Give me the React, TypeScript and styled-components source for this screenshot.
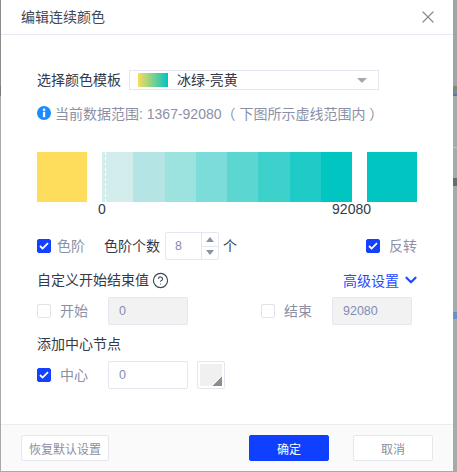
import React from "react";
import styled, { createGlobalStyle } from "styled-components";
import { ChevronDown, CircleHelp, X } from "lucide-react";

const Global = createGlobalStyle`
  html, body { margin: 0; padding: 0; background: #a9a9a9; }
  * { box-sizing: border-box; }
  body { font-family: "Liberation Sans", "Noto Sans CJK SC", sans-serif; font-size: 14px; }
`;

const Page = styled.div`
  display: flex;
  width: 457px;
  height: 472px;
  overflow: hidden;
`;
const LeftEdge = styled.div`
  width: 1px;
  flex: none;
  background: linear-gradient(#8c8c8c 0 86px, #7c7c7c 86px 95px, #5d74b0 95px 96px, #a9a9a9 96px);
`;
const RightEdge = styled.div`
  width: 4px;
  flex: none;
  background: linear-gradient(#a3a3a3 0 86px, #848484 86px 94px, #5d74b0 94px 96px, #a9a9a9 96px 147px,
    #c4c4c4 147px 148px, #a9a9a9 148px 178px, #6b6b6b 178px 186px, #a9a9a9 186px 312px,
    #6b90bf 312px 319px, #a9a9a9 319px);
`;
const Dialog = styled.div`
  width: 452px;
  height: 471px;
  background: #fff;
  display: flex;
  flex-direction: column;
  color: #333a4a;
`;
const Header = styled.header`
  height: 35px;
  flex: none;
  border-bottom: 1px solid #e8e8f2;
  padding: 0 15px 0 20px;
  display: flex;
  align-items: center;
  justify-content: space-between;
`;
const Title = styled.div`
  font-size: 14px;
  line-height: 34px;
  color: #3f4658;
`;
const CloseIcon = styled(X)`
  width: 20px;
  height: 20px;
  color: #8a8d94;
`;
const Body = styled.main`
  flex: 1;
  padding: 35px 36px 0;
`;
const TemplateRow = styled.div`
  display: flex;
  align-items: center;
  height: 20px;
  gap: 8px;
`;
const Label = styled.span<{ $muted?: boolean; $ml?: number }>`
  line-height: 20px;
  white-space: nowrap;
  flex: none;
  color: ${(p) => (p.$muted ? "#8b90a6" : "#333a4a")};
  margin-left: ${(p) => p.$ml ?? 0}px;
`;
const Select = styled.div`
  width: 250px;
  height: 20px;
  border: 1px solid #e6e6f0;
  display: flex;
  align-items: center;
  padding: 0 11px 0 8px;
`;
const Swatch = styled.span`
  width: 30px;
  height: 14px;
  background: linear-gradient(90deg, #f7dc5c, #00c5c1);
`;
const SelectText = styled.span`
  margin-left: 9px;
  flex: 1;
  line-height: 18px;
`;
const Caret = styled.span`
  width: 0;
  height: 0;
  border-left: 5px solid transparent;
  border-right: 5px solid transparent;
  border-top: 5px solid #a4a7b4;
`;
const InfoRow = styled.div`
  margin-top: 13px;
  height: 20px;
  display: flex;
  align-items: center;
  gap: 4px;
  color: #8b90a6;
  white-space: nowrap;
`;
const BarRow = styled.div`
  margin-top: 29px;
  display: flex;
  gap: 15px;
  height: 50px;
`;
const EndBlock = styled.div<{ $c: string }>`
  width: 50px;
  background: ${(p) => p.$c};
`;
const Strip = styled.div`
  width: 250px;
  display: flex;
  position: relative;
`;
const Step = styled.div<{ $c: string }>`
  flex: 1;
  background: ${(p) => p.$c};
`;
const Dash = styled.div`
  position: absolute;
  left: 3px;
  top: 0;
  bottom: 0;
  border-left: 1px dashed #fff;
`;
const Axis = styled.div`
  margin-left: 61px;
  width: 273px;
  height: 16px;
  display: flex;
  justify-content: space-between;
  line-height: 15px;
  color: #333a4a;
`;
const ScaleRow = styled.div`
  margin-top: 14px;
  height: 28px;
  display: flex;
  align-items: center;
`;
const Check = styled.span<{ $on?: boolean }>`
  width: 14px;
  height: 14px;
  flex: none;
  border-radius: 2px;
  display: inline-flex;
  align-items: center;
  justify-content: center;
  background: ${(p) => (p.$on ? "#1440ff" : "#fff")};
  border: 1px solid ${(p) => (p.$on ? "#1440ff" : "#e3e3ec")};
`;
const CheckBox = ({ on }: { on?: boolean }) => (
  <Check $on={on}>
    {on && (
      <svg width="10" height="8" viewBox="0 0 10 8">
        <path d="M1 4l2.6 2.6L9 1.2" fill="none" stroke="#fff" strokeWidth="1.8" />
      </svg>
    )}
  </Check>
);
const Spin = styled.div`
  margin-left: 5px;
  width: 54px;
  height: 28px;
  border: 1px solid #e6e6f0;
  border-radius: 2px;
  display: flex;
  flex: none;
`;
const SpinValue = styled.span`
  flex: 1;
  padding-left: 9px;
  font-size: 12.5px;
  line-height: 26px;
  color: #7f8db5;
`;
const SpinButtons = styled.div`
  width: 17px;
  border-left: 1px solid #e6e6f0;
  display: flex;
  flex-direction: column;
`;
const SpinButton = styled.div<{ $down?: boolean }>`
  flex: 1;
  display: flex;
  align-items: center;
  justify-content: center;
  ${(p) => (p.$down ? "border-top: 1px solid #e6e6f0;" : "")}
  &::after {
    content: "";
    border-left: 4px solid transparent;
    border-right: 4px solid transparent;
    ${(p) => (p.$down ? "border-top: 5px solid #8d91a6;" : "border-bottom: 5px solid #8d91a6;")}
  }
`;
const Spacer = styled.span<{ $w?: number }>`
  ${(p) => (p.$w ? `width: ${p.$w}px; flex: none;` : "flex: 1;")}
`;
const RangeHead = styled.div`
  margin-top: 10px;
  height: 20px;
  display: flex;
  align-items: center;
`;
const HelpIcon = styled(CircleHelp)`
  width: 17px;
  height: 17px;
  margin-left: 3px;
  color: #3f4658;
`;
const Advanced = styled.div`
  margin-left: auto;
  margin-right: 1px;
  display: flex;
  align-items: center;
  gap: 6px;
  color: #1f4bff;
`;
const AdvancedChevron = styled(ChevronDown)`
  width: 18px;
  height: 18px;
  margin: 0 -3.5px;
`;
const FieldRow = styled.div<{ $mt: number }>`
  margin-top: ${(p) => p.$mt}px;
  height: 28px;
  display: flex;
  align-items: center;
`;
const SectionTitle = styled.div`
  margin-top: 9px;
  height: 20px;
  line-height: 20px;
`;
const ValueBox = styled.div<{ $off?: boolean }>`
  width: 80px;
  height: 28px;
  flex: none;
  margin-left: 20px;
  border: 1px solid #e6e6f0;
  border-radius: 2px;
  padding-left: 10px;
  font-size: 12.5px;
  line-height: 26px;
  color: #7f8db5;
  background: ${(p) => (p.$off ? "#f2f2f3" : "#fff")};
`;
const ColorPicker = styled.div`
  margin-left: 9px;
  width: 28px;
  height: 28px;
  border: 1px solid #e6e6f0;
  border-radius: 2px;
  padding: 2px;
`;
const ColorFill = styled.div`
  width: 100%;
  height: 100%;
  background: linear-gradient(135deg, #f0f0f0 0 78%, #8c8c8c 78%);
`;
const Footer = styled.footer`
  height: 47px;
  flex: none;
  background: #fafafa;
  border-top: 1px solid #ececf0;
  padding: 10px 20px 0;
  display: flex;
  align-items: flex-start;
`;
const Button = styled.button<{ $primary?: boolean; $w: number; $ml?: number }>`
  width: ${(p) => p.$w}px;
  height: 26px;
  padding: 0;
  font: inherit;
  font-size: 12px;
  border-radius: 2px;
  border: 1px solid ${(p) => (p.$primary ? "#0f3fff" : "#e6e6ec")};
  background: ${(p) => (p.$primary ? "#0f3fff" : "#fff")};
  color: ${(p) => (p.$primary ? "#fff" : "#8b8f9e")};
  margin-left: ${(p) => p.$ml ?? 0}px;
`;

const steps = ["#d3ecec", "#b5e4e4", "#9ce2df", "#7cdcd9", "#5cd6d1", "#3ed0cb", "#1fcbc6", "#00c5c1"];

const InfoIcon = () => (
  <svg width="14" height="14" viewBox="0 0 14 14">
    <circle cx="7" cy="7" r="7" fill="#1a8cff" />
    <rect x="5.9" y="2.6" width="2.3" height="2.2" fill="#fff" />
    <rect x="5.9" y="5.8" width="2.3" height="5.4" fill="#fff" />
  </svg>
);

export default function App() {
  return (
    <Page>
      <Global />
      <LeftEdge />
      <Dialog>
        <Header>
          <Title>编辑连续颜色</Title>
          <CloseIcon strokeWidth={1.5} />
        </Header>
        <Body>
          <TemplateRow>
            <Label>选择颜色模板</Label>
            <Select>
              <Swatch />
              <SelectText>冰绿-亮黄</SelectText>
              <Caret />
            </Select>
          </TemplateRow>
          <InfoRow>
            <InfoIcon />
            当前数据范围: 1367-92080（ 下图所示虚线范围内 ）
          </InfoRow>
          <BarRow>
            <EndBlock $c="#ffdd5c" />
            <Strip>
              {steps.map((c) => (
                <Step key={c} $c={c} />
              ))}
              <Dash />
            </Strip>
            <EndBlock $c="#00c5c1" />
          </BarRow>
          <Axis>
            <span>0</span>
            <span>92080</span>
          </Axis>
          <ScaleRow>
            <CheckBox on />
            <Label $muted $ml={6}>色阶</Label>
            <Label $ml={19}>色阶个数</Label>
            <Spin>
              <SpinValue>8</SpinValue>
              <SpinButtons>
                <SpinButton />
                <SpinButton $down />
              </SpinButtons>
            </Spin>
            <Label $ml={4}>个</Label>
            <Spacer />
            <CheckBox on />
            <Label $muted $ml={9}>反转</Label>
          </ScaleRow>
          <RangeHead>
            <Label>自定义开始结束值</Label>
            <HelpIcon strokeWidth={1.6} />
            <Advanced>
              高级设置
              <AdvancedChevron strokeWidth={3} />
            </Advanced>
          </RangeHead>
          <FieldRow $mt={7}>
            <CheckBox />
            <Label $muted $ml={9}>开始</Label>
            <ValueBox $off>0</ValueBox>
            <Spacer $w={73} />
            <CheckBox />
            <Label $muted $ml={9}>结束</Label>
            <ValueBox $off>92080</ValueBox>
          </FieldRow>
          <SectionTitle>添加中心节点</SectionTitle>
          <FieldRow $mt={7}>
            <CheckBox on />
            <Label $muted $ml={9}>中心</Label>
            <ValueBox>0</ValueBox>
            <ColorPicker>
              <ColorFill />
            </ColorPicker>
          </FieldRow>
        </Body>
        <Footer>
          <Button $w={88}>恢复默认设置</Button>
          <Button $primary $w={80} $ml={140}>确定</Button>
          <Button $w={80} $ml={24}>取消</Button>
        </Footer>
      </Dialog>
      <RightEdge />
    </Page>
  );
}
